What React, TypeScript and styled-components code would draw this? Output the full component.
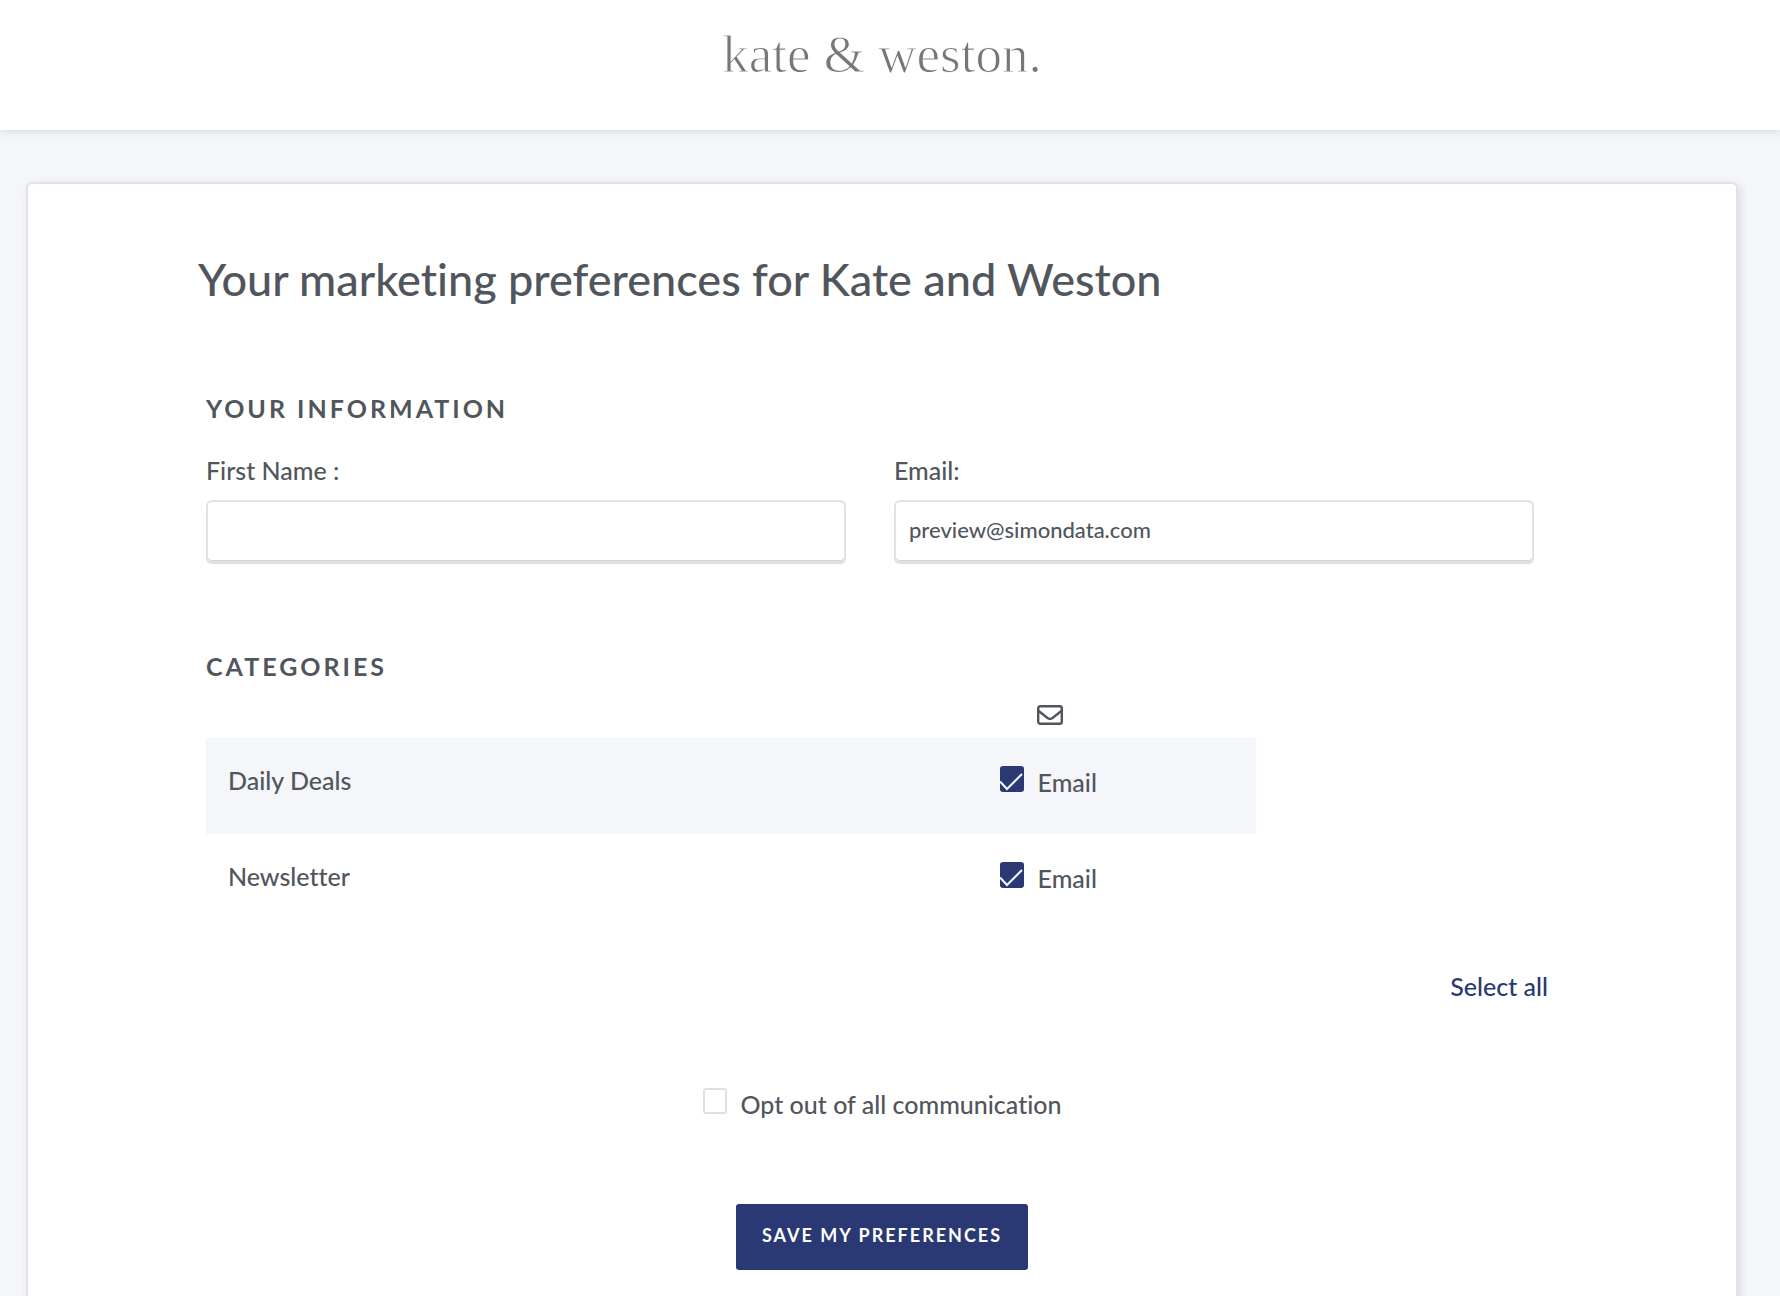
import React, { useState } from "react";
import styled, { createGlobalStyle } from "styled-components";

const ink = "#51565c";
const navy = "#2a3973";
const line = "#e1e2e4";
const mist = "#f5f6f9";

const GlobalStyle = createGlobalStyle`
  *, *::before, *::after { box-sizing: border-box; }
  body {
    margin: 0;
    background: ${mist};
    color: ${ink};
    font-family: Lato, "Liberation Sans", sans-serif;
    font-size: 25px;
    font-variant-ligatures: none;
    font-weight: 500;
    line-height: 30px;
  }
`;

const Header = styled.header`
  display: flex;
  justify-content: center;
  height: 130px;
  padding: 24px 16px 0 0;
  background: #fff;
  box-shadow: 0 2px 8px rgba(40, 40, 60, 0.13);
`;

const Wordmark = styled.div`
  color: #777;
  font-family: "Liberation Serif", serif;
  font-size: 53px;
  font-weight: 400;
  line-height: 60px;
  -webkit-text-stroke: 1px #fff;
`;

const Main = styled.main`
  padding: 52px 42px 40px 26px;
`;

const Card = styled.form`
  padding: 69px 170px 80px;
  background: #fff;
  border: 2px solid ${line};
  border-radius: 6px;
  box-shadow: 3px 3px 8px rgba(40, 40, 60, 0.12);
`;

const Title = styled.h1`
  margin: 0 0 88px;
  font-size: 45px;
  font-weight: 500;
  line-height: 52px;
`;

const Section = styled.section`
  padding: 0 32px 0 8px;
  & + & { margin-top: 88px; }
`;

const SectionTitle = styled.h2`
  margin: 0;
  font-size: 25px;
  font-weight: 700;
  line-height: 30px;
  letter-spacing: 3px;
  text-transform: uppercase;
`;

const Fields = styled.div`
  display: grid;
  grid-template-columns: 1fr 1fr;
  gap: 48px;
  margin-top: 32px;
`;

const Field = styled.label`
  display: grid;
  gap: 15px;
`;

const TextInput = styled.input`
  width: 100%;
  height: 63px;
  padding: 0 13px 4px;
  border: 2px solid ${line};
  border-radius: 6px;
  background: #fff;
  box-shadow: 0 1px 0 #d9dcdf, inset 0 -1px 0 #cfd5da;
  color: ${ink};
  font: inherit;
  font-size: 22px;
`;

const CategoryTable = styled.table`
  width: 100%;
  max-width: 1050px;
  border-collapse: collapse;
  table-layout: fixed;
`;

const IconHead = styled.th`
  width: 39%;
  height: 57px;
  padding: 10px 2px 0 0;
`;

const EnvelopeIcon = styled.svg`
  display: block;
  width: 26px;
  height: 20px;
  margin: 0 auto;
`;

const Row = styled.tr`
  height: 96px;
  background: #fff;
  &:nth-child(odd) { background: ${mist}; }
`;

const NameCell = styled.th`
  padding: 27px 22px;
  font-weight: inherit;
  text-align: left;
  vertical-align: top;
`;

const ChannelCell = styled.td`
  padding: 28px 6px 0 0;
  text-align: center;
  vertical-align: top;
`;

const CheckLabel = styled.label`
  display: inline-flex;
  align-items: flex-start;
  gap: 14px;
  cursor: pointer;
`;

const CheckText = styled.span`
  padding-top: 1px;
`;

const CheckStack = styled.span`
  display: grid;
  > * { grid-area: 1 / 1; }
`;

const CheckInput = styled.input`
  appearance: none;
  width: 24px;
  height: 26px;
  margin: 0;
  border: 2px solid #e0e0e1;
  border-radius: 3px;
  background: #fff;
  &:checked {
    border-color: ${navy};
    background: ${navy};
  }
`;

const CheckMark = styled.svg`
  width: 24px;
  height: 26px;
  pointer-events: none;
`;

const SelectRow = styled.div`
  display: flex;
  justify-content: flex-end;
  margin: 41px 18px 87px 0;
`;

const LinkButton = styled.button`
  padding: 0;
  border: 0;
  background: none;
  color: ${navy};
  font: inherit;
  cursor: pointer;
`;

const Footer = styled.div`
  display: flex;
  flex-direction: column;
  align-items: center;
  gap: 85px;
`;

const SaveButton = styled.button`
  height: 66px;
  padding: 0 26px 4px;
  border: 0;
  border-radius: 3px;
  background: ${navy};
  color: #fff;
  font: inherit;
  font-size: 18px;
  font-weight: 700;
  letter-spacing: 2px;
  text-transform: uppercase;
  cursor: pointer;
`;

type CheckProps = {
  label: string;
  checked: boolean;
  onChange: (next: boolean) => void;
};

function Check({ label, checked, onChange }: CheckProps) {
  return (
    <CheckLabel>
      <CheckStack>
        <CheckInput
          type="checkbox"
          checked={checked}
          onChange={(e) => onChange(e.target.checked)}
        />
        {checked && (
          <CheckMark viewBox="0 0 24 26" fill="none" aria-hidden="true">
            <path d="M0 15.5 7 23 22 8" stroke="#fff" strokeWidth="2" />
          </CheckMark>
        )}
      </CheckStack>
      <CheckText>{label}</CheckText>
    </CheckLabel>
  );
}

const categories = ["Daily Deals", "Newsletter"];

export default function App() {
  const [chosen, setChosen] = useState<string[]>(categories);
  const [optOut, setOptOut] = useState(false);
  const [firstName, setFirstName] = useState("");
  const [email, setEmail] = useState("preview@simondata.com");

  const toggle = (name: string, on: boolean) =>
    setChosen((prev) => (on ? [...prev, name] : prev.filter((n) => n !== name)));

  return (
    <>
      <GlobalStyle />
      <Header>
        <Wordmark>kate &amp; weston.</Wordmark>
      </Header>
      <Main>
        <Card onSubmit={(e) => e.preventDefault()}>
          <Title>Your marketing preferences for Kate and Weston</Title>
          <Section>
            <SectionTitle>Your information</SectionTitle>
            <Fields>
              <Field>
                First Name :
                <TextInput
                  type="text"
                  value={firstName}
                  onChange={(e) => setFirstName(e.target.value)}
                />
              </Field>
              <Field>
                Email:
                <TextInput
                  type="email"
                  value={email}
                  onChange={(e) => setEmail(e.target.value)}
                />
              </Field>
            </Fields>
          </Section>
          <Section>
            <SectionTitle>Categories</SectionTitle>
            <CategoryTable>
              <thead>
                <tr>
                  <td />
                  <IconHead scope="col" aria-label="Email">
                    <EnvelopeIcon viewBox="0 0 26 20" fill="none" stroke={ink} strokeWidth="2.4">
                      <rect x="1.2" y="1.2" width="23.6" height="17.6" rx="2" />
                      <path d="M1 5.5 10.5 13Q13 14.8 15.5 13L25 5.5" />
                    </EnvelopeIcon>
                  </IconHead>
                </tr>
              </thead>
              <tbody>
                {categories.map((name) => (
                  <Row key={name}>
                    <NameCell scope="row">{name}</NameCell>
                    <ChannelCell>
                      <Check
                        label="Email"
                        checked={chosen.includes(name)}
                        onChange={(on) => toggle(name, on)}
                      />
                    </ChannelCell>
                  </Row>
                ))}
              </tbody>
            </CategoryTable>
          </Section>
          <SelectRow>
            <LinkButton type="button" onClick={() => setChosen(categories)}>
              Select all
            </LinkButton>
          </SelectRow>
          <Footer>
            <Check label="Opt out of all communication" checked={optOut} onChange={setOptOut} />
            <SaveButton type="submit">Save my preferences</SaveButton>
          </Footer>
        </Card>
      </Main>
    </>
  );
}
